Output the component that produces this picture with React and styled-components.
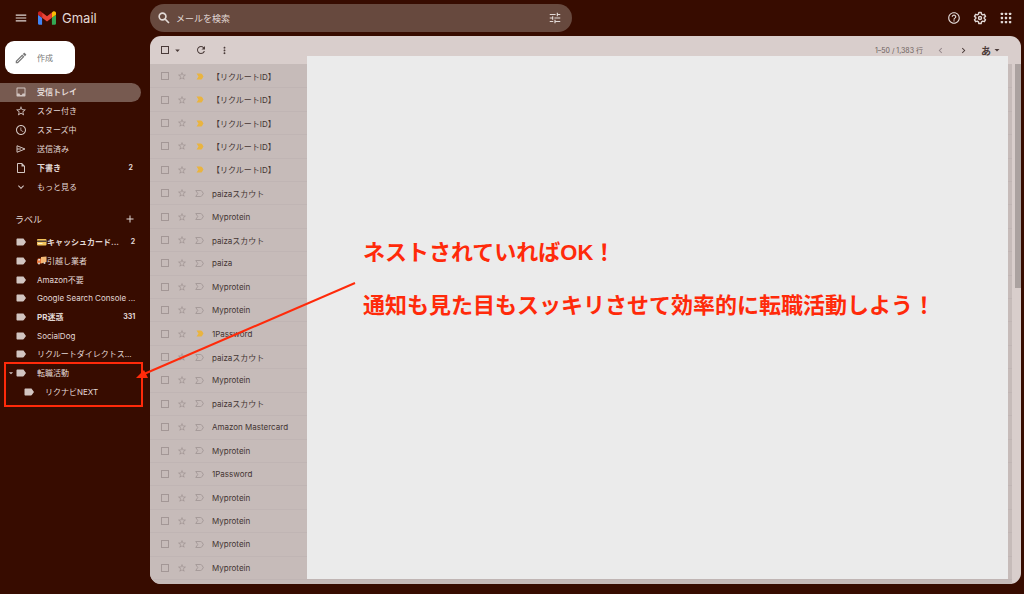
import React from 'react';
import styled, { createGlobalStyle } from 'styled-components';
import {
  MdAdd,
  MdArrowDropDown,
  MdChevronLeft,
  MdChevronRight,
  MdExpandMore,
  MdHelpOutline,
  MdInbox,
  MdLabel,
  MdMenu,
  MdMoreVert,
  MdOutlineEdit,
  MdOutlineInsertDriveFile,
  MdRefresh,
  MdSchedule,
  MdStarBorder,
  MdTune,
} from 'react-icons/md';

const COLORS = {
  page: '#370c00',
  search: '#67493e',
  active: '#775a50',
  light: '#e2d9d6',
  icon: '#d2c5c1',
  toolbar: '#d9cecc',
  row: '#c6bbb9',
  line: '#c0b5b4',
  cover: '#ebebeb',
  yellow: '#e9b440',
  red: '#ff2a0a',
};

const GlobalStyle = createGlobalStyle`
  * {
    box-sizing: border-box;
  }
  body {
    margin: 0;
    background: ${COLORS.page};
    color: ${COLORS.light};
    font-family: Inter, 'Noto Sans CJK JP', sans-serif;
    font-size: 8px;
  }
  button, input {
    font: inherit;
    color: inherit;
  }
  ul {
    list-style: none;
    margin: 0;
    padding: 0;
  }
  svg {
    display: block;
    flex-shrink: 0;
  }
`;

const Page = styled.div`
  position: relative;
  min-height: 100vh;
  display: flex;
  flex-direction: column;
  padding: 0 3px 10px 0;
`;

const Header = styled.header`
  height: 36px;
  display: flex;
  align-items: center;
`;

const Brand = styled.div`
  width: 150px;
  flex-shrink: 0;
  display: flex;
  align-items: center;
  padding-left: 14px;
`;

const IconButton = styled.button`
  display: flex;
  align-items: center;
  padding: 0;
  border: 0;
  background: none;
  color: ${props => props.$color || COLORS.light};
  cursor: pointer;
`;

const LogoLink = styled.a`
  display: flex;
  align-items: center;
  gap: 6px;
  margin-left: 10px;
  color: ${COLORS.light};
  font-size: 13px;
  line-height: 16px;
  text-decoration: none;
`;

const SearchBar = styled.form`
  flex: 0 1 422px;
  height: 28px;
  display: flex;
  align-items: center;
  gap: 5px;
  padding: 0 10px 0 7px;
  border-radius: 14px;
  background: ${COLORS.search};
`;

const SearchInput = styled.input`
  flex: 1;
  min-width: 0;
  padding: 0;
  border: 0;
  outline: 0;
  background: none;
  font-size: 9px;
  &::placeholder {
    color: ${COLORS.light};
    opacity: 1;
  }
`;

const HeaderActions = styled.div`
  margin-left: auto;
  display: flex;
  gap: 12px;
  padding-right: 8px;
`;

const Body = styled.div`
  flex: 1;
  display: flex;
`;

const Sidebar = styled.nav`
  width: 150px;
  flex-shrink: 0;
`;

const ComposeButton = styled.button`
  display: flex;
  align-items: center;
  gap: 9px;
  width: 70px;
  height: 33px;
  margin: 5px 0 9px 5px;
  padding: 0 9px;
  border: 0;
  border-radius: 9px;
  background: #fff;
  color: #777;
  cursor: pointer;
`;

const NavList = styled.ul`
  position: relative;
  display: grid;
  grid-auto-rows: 1fr;
  height: ${props => props.$height}px;
`;

const NavLink = styled.a`
  height: 100%;
  display: flex;
  align-items: center;
  gap: 10px;
  margin-right: 9px;
  padding: 0 8px 0 ${props => (props.$nested ? 23 : 15)}px;
  border-radius: 0 10px 10px 0;
  background: ${props => (props.$active ? COLORS.active : 'transparent')};
  color: ${COLORS.light};
  font-weight: ${props => (props.$bold ? 700 : 400)};
  line-height: 10px;
  text-decoration: none;
  svg {
    color: ${COLORS.icon};
  }
`;

const NavText = styled.span`
  flex: 1;
  min-width: 0;
  display: flex;
  align-items: center;
  white-space: nowrap;
`;

const NavCount = styled.span`
  font-size: 7px;
`;

const LabelHeading = styled.div`
  display: flex;
  align-items: center;
  justify-content: space-between;
  height: 20px;
  margin: 13px 14px 4px 15px;
`;

const HeadingText = styled.h2`
  margin: 0;
  font-size: 9px;
  font-weight: 400;
`;

// takes no room in the row, so the label icons stay in one column
const Caret = styled.span`
  width: 10px;
  margin: 0 -11px 0 -9px;
`;

const RedFrame = styled.div`
  position: absolute;
  left: 4px;
  right: 7px;
  bottom: -6px;
  height: 45px;
  border: 2px solid ${COLORS.red};
  pointer-events: none;
`;

const Panel = styled.main`
  position: relative;
  flex: 1;
  display: flex;
  flex-direction: column;
  border-radius: 11px;
  background: ${COLORS.toolbar};
  color: #443533;
  overflow: hidden;
`;

const Toolbar = styled.div`
  height: 28px;
  display: flex;
  align-items: center;
  padding: 0 18px 0 11px;
`;

const ToolGroup = styled.div`
  display: flex;
  align-items: center;
  gap: 12px;
  margin-left: ${props => (props.$end ? 'auto' : '0')};
`;

const SelectAll = styled.div`
  display: flex;
  align-items: center;
  gap: 3px;
`;

const CheckBox = styled.input`
  appearance: none;
  width: 8px;
  height: 8px;
  flex-shrink: 0;
  margin: 0;
  border: 1px solid ${props => props.$color || '#a39796'};
`;

const Pager = styled.span`
  font-size: 7px;
  color: #6d5f5d;
`;

const InputTool = styled.b`
  font-size: 10px;
`;

const ListArea = styled.div`
  flex: 1;
  display: flex;
`;

const MailList = styled.ul`
  flex: 1;
  display: flex;
  flex-direction: column;
  padding: 1px 0 4px;
  background: ${COLORS.row};
`;

const MailRow = styled.li`
  flex: 1;
  display: flex;
  align-items: center;
  gap: 8px;
  padding-left: 11px;
  border-bottom: 1px solid ${COLORS.line};
`;

const Sender = styled.label`
  white-space: nowrap;
`;

const ScrollTrack = styled.div`
  width: 9px;
  padding-left: 3px;
`;

const ScrollThumb = styled.div`
  height: 43%;
  background: #aba2a0;
`;

// hides the subjects and carries the message
const Cover = styled.div`
  position: absolute;
  top: 20px;
  right: 13px;
  bottom: 5px;
  left: 157px;
  padding: 170px 0 0 56px;
  background: ${COLORS.cover};
  color: ${COLORS.red};
  font-family: 'Liberation Sans', 'Noto Sans CJK JP', sans-serif;
  font-size: 22px;
  font-weight: 700;
  line-height: 53px;
`;

const Message = styled.p`
  margin: 0;
  white-space: nowrap;
`;

const ArrowSvg = styled.svg`
  position: absolute;
  top: 280px;
  left: 134px;
  pointer-events: none;
`;

function GmailLogo() {
  return (
    <svg width="18" height="14" viewBox="0 0 88 66" aria-hidden="true">
      <path fill="#4285f4" d="M6 66h14V32L0 17v43c0 3.300 2.700 6 6 6z" />
      <path fill="#34a853" d="M68 66h14c3.300 0 6-2.700 6-6V17L68 32z" />
      <path fill="#fbbc04" d="M68 6v26l20-15V9c0-7.400-8.500-11.600-14.400-7.200z" />
      <path fill="#ea4335" d="M20 32V6l24 18L68 6v26L44 50z" />
      <path fill="#c5221f" d="M0 9v8l20 15V6l-5.600-4.200C8.500-2.600 0 1.600 0 9z" />
    </svg>
  );
}

function SearchIcon() {
  return (
    <svg width="14" height="14" viewBox="0 0 24 24" fill="none" stroke="currentColor" strokeWidth="2.800" aria-hidden="true">
      <circle cx="9.500" cy="9.500" r="5.800" />
      <path d="M14 14l6.500 6.500" />
    </svg>
  );
}

function GearIcon() {
  return (
    <svg width="14" height="14" viewBox="0 0 24 24" fill="none" stroke="currentColor" strokeWidth="2.400" strokeLinejoin="round" aria-hidden="true">
      <path d="M10 2.500h4l.6 3 2 1.200 2.900-1 2 3.500L19.200 11v2l2.300 1.900-2 3.400-2.900-1-2 1.200-.6 3h-4l-.6-3-2-1.200-2.900 1-2-3.400L4.800 13v-2L2.500 9.200l2-3.500 2.900 1 2-1.200z" />
      <circle cx="12" cy="12" r="2.600" />
    </svg>
  );
}

function AppsIcon() {
  const steps = [5, 12, 19];
  return (
    <svg width="14" height="14" viewBox="0 0 24 24" fill="currentColor" aria-hidden="true">
      {steps.map(y => steps.map(x => (
        <rect key={`${x}-${y}`} x={x - 2} y={y - 2} width="4" height="4" rx="1" />
      )))}
    </svg>
  );
}

function SendIcon({ size }) {
  return (
    <svg width={size} height={size} viewBox="0 0 24 24" fill="none" stroke="currentColor" strokeWidth="2" aria-hidden="true">
      <path d="M4 5.500L20 12 4 18.500zM4 12h8" />
    </svg>
  );
}

function ImportantIcon({ on }) {
  if (on) {
    return (
      <svg width="9" height="9" viewBox="0 0 18 18" fill={COLORS.yellow} aria-hidden="true">
        <path d="M3 3h8c1.500 0 2.500.6 3.300 1.700L17 9l-2.700 4.300C13.500 14.400 12.500 15 11 15H3l4-6z" />
      </svg>
    );
  }
  return (
    <svg width="9" height="9" viewBox="0 0 18 18" fill="none" stroke="#a39796" strokeWidth="1.800" aria-hidden="true">
      <path d="M1.500 3h9.500c1.300 0 2.200.5 2.900 1.600L16.600 9l-2.700 4.400c-.7 1.100-1.600 1.600-2.900 1.600H1.500l4-6z" />
    </svg>
  );
}

function CardArt() {
  return (
    <svg width="10" height="8" viewBox="0 0 20 16" aria-hidden="true">
      <rect x="0" y="2" width="19" height="13" rx="2" fill="#f2c35b" />
      <rect x="0" y="5" width="19" height="3" fill="#54443a" />
      <rect x="2" y="10" width="9" height="2" fill="#fff2c8" />
    </svg>
  );
}

function TruckArt() {
  return (
    <svg width="10" height="9" viewBox="0 0 20 18" aria-hidden="true">
      <path fill="#f4b877" d="M8 2l11-1v11l-11 3z" />
      <path fill="#e8743a" d="M0 9l2-4h6v10H0z" />
      <path fill="#dbe8ee" d="M2 9l1-3h3v3z" />
      <circle cx="4" cy="15" r="2" fill="#d8d4d2" />
      <circle cx="15" cy="14" r="2" fill="#d8d4d2" />
    </svg>
  );
}

const FOLDERS = [
  { text: '受信トレイ', icon: MdInbox, active: true, bold: true },
  { text: 'スター付き', icon: MdStarBorder },
  { text: 'スヌーズ中', icon: MdSchedule },
  { text: '送信済み', icon: SendIcon },
  { text: '下書き', icon: MdOutlineInsertDriveFile, bold: true, count: 2 },
  { text: 'もっと見る', icon: MdExpandMore },
];

const LABELS = [
  { text: 'キャッシュカード...', art: 'card', bold: true, count: 2 },
  { text: '引越し業者', art: 'truck' },
  { text: 'Amazon不要' },
  { text: 'Google Search Console ...' },
  { text: 'PR迷惑', bold: true, count: 331 },
  { text: 'SocialDog' },
  { text: 'リクルートダイレクトス...' },
  { text: '転職活動', open: true },
  { text: 'リクナビNEXT', nested: true },
];

const MAILS = [
  { from: '【リクルートID】', important: true },
  { from: '【リクルートID】', important: true },
  { from: '【リクルートID】', important: true },
  { from: '【リクルートID】', important: true },
  { from: '【リクルートID】', important: true },
  { from: 'paizaスカウト' },
  { from: 'Myprotein' },
  { from: 'paizaスカウト' },
  { from: 'paiza' },
  { from: 'Myprotein' },
  { from: 'Myprotein' },
  { from: '1Password', important: true },
  { from: 'paizaスカウト' },
  { from: 'Myprotein' },
  { from: 'paizaスカウト' },
  { from: 'Amazon Mastercard' },
  { from: 'Myprotein' },
  { from: '1Password' },
  { from: 'Myprotein' },
  { from: 'Myprotein' },
  { from: 'Myprotein' },
  { from: 'Myprotein' },
];

function NavItem({ item, icon: Icon }) {
  return (
    <li>
      <NavLink href="#" $active={item.active} $bold={item.bold} $nested={item.nested}>
        {item.open && <Caret><MdArrowDropDown size={10} /></Caret>}
        <Icon size={12} />
        <NavText>
          {item.art === 'card' && <CardArt />}
          {item.art === 'truck' && <TruckArt />}
          {item.text}
        </NavText>
        {item.count && <NavCount>{item.count}</NavCount>}
      </NavLink>
    </li>
  );
}

export default function App() {
  return (
    <Page lang="ja">
      <GlobalStyle />
      <Header>
        <Brand>
          <IconButton aria-label="メインメニュー"><MdMenu size={14} /></IconButton>
          <LogoLink href="#">
            <GmailLogo />
            Gmail
          </LogoLink>
        </Brand>
        <SearchBar role="search">
          <IconButton type="button" aria-label="検索"><SearchIcon /></IconButton>
          <SearchInput type="text" aria-label="メールを検索" placeholder="メールを検索" />
          <IconButton type="button" aria-label="検索オプション"><MdTune size={14} /></IconButton>
        </SearchBar>
        <HeaderActions>
          <IconButton aria-label="サポート"><MdHelpOutline size={14} /></IconButton>
          <IconButton aria-label="設定"><GearIcon /></IconButton>
          <IconButton aria-label="アプリ"><AppsIcon /></IconButton>
        </HeaderActions>
      </Header>

      <Body>
        <Sidebar>
          <ComposeButton>
            <MdOutlineEdit size={14} />
            作成
          </ComposeButton>
          <NavList $height={113}>
            {FOLDERS.map(item => (
              <NavItem key={item.text} item={item} icon={item.icon} />
            ))}
          </NavList>
          <LabelHeading>
            <HeadingText>ラベル</HeadingText>
            <IconButton aria-label="新しいラベルを作成"><MdAdd size={12} /></IconButton>
          </LabelHeading>
          <NavList $height={168}>
            {LABELS.map(item => (
              <NavItem key={item.text} item={item} icon={MdLabel} />
            ))}
            <RedFrame />
          </NavList>
        </Sidebar>

        <Panel>
          <Toolbar>
            <ToolGroup>
              <SelectAll>
                <CheckBox type="checkbox" aria-label="すべて選択" $color="#4a3b39" />
                <IconButton aria-label="選択" $color="#4a3b39"><MdArrowDropDown size={11} /></IconButton>
              </SelectAll>
              <IconButton aria-label="更新" $color="#4a3b39"><MdRefresh size={12} /></IconButton>
              <IconButton aria-label="その他" $color="#4a3b39"><MdMoreVert size={11} /></IconButton>
            </ToolGroup>
            <ToolGroup $end>
              <Pager>1–50 / 1,383 行</Pager>
              <IconButton aria-label="前" $color="#93878a"><MdChevronLeft size={11} /></IconButton>
              <IconButton aria-label="次" $color="#4a3b39"><MdChevronRight size={11} /></IconButton>
              <IconButton aria-label="入力ツール" $color="#4a3b39">
                <InputTool>あ</InputTool>
                <MdArrowDropDown size={12} />
              </IconButton>
            </ToolGroup>
          </Toolbar>
          <ListArea>
            <MailList>
              {MAILS.map((mail, i) => (
                <MailRow key={i}>
                  <CheckBox type="checkbox" id={`mail-${i}`} />
                  <IconButton aria-label="スター" $color="#a39796"><MdStarBorder size={10} /></IconButton>
                  <ImportantIcon on={mail.important} />
                  <Sender htmlFor={`mail-${i}`}>{mail.from}</Sender>
                </MailRow>
              ))}
            </MailList>
            <ScrollTrack>
              <ScrollThumb />
            </ScrollTrack>
          </ListArea>
          <Cover>
            <Message>ネストされていればOK！</Message>
            <Message>通知も見た目もスッキリさせて効率的に転職活動しよう！</Message>
          </Cover>
        </Panel>
      </Body>

      <ArrowSvg width="224" height="102" viewBox="0 0 224 102" aria-hidden="true">
        <path d="M221 3L10 94" stroke={COLORS.red} strokeWidth="2" fill="none" />
        <path d="M2 98l8-8 4 8z" fill={COLORS.red} />
      </ArrowSvg>
    </Page>
  );
}
